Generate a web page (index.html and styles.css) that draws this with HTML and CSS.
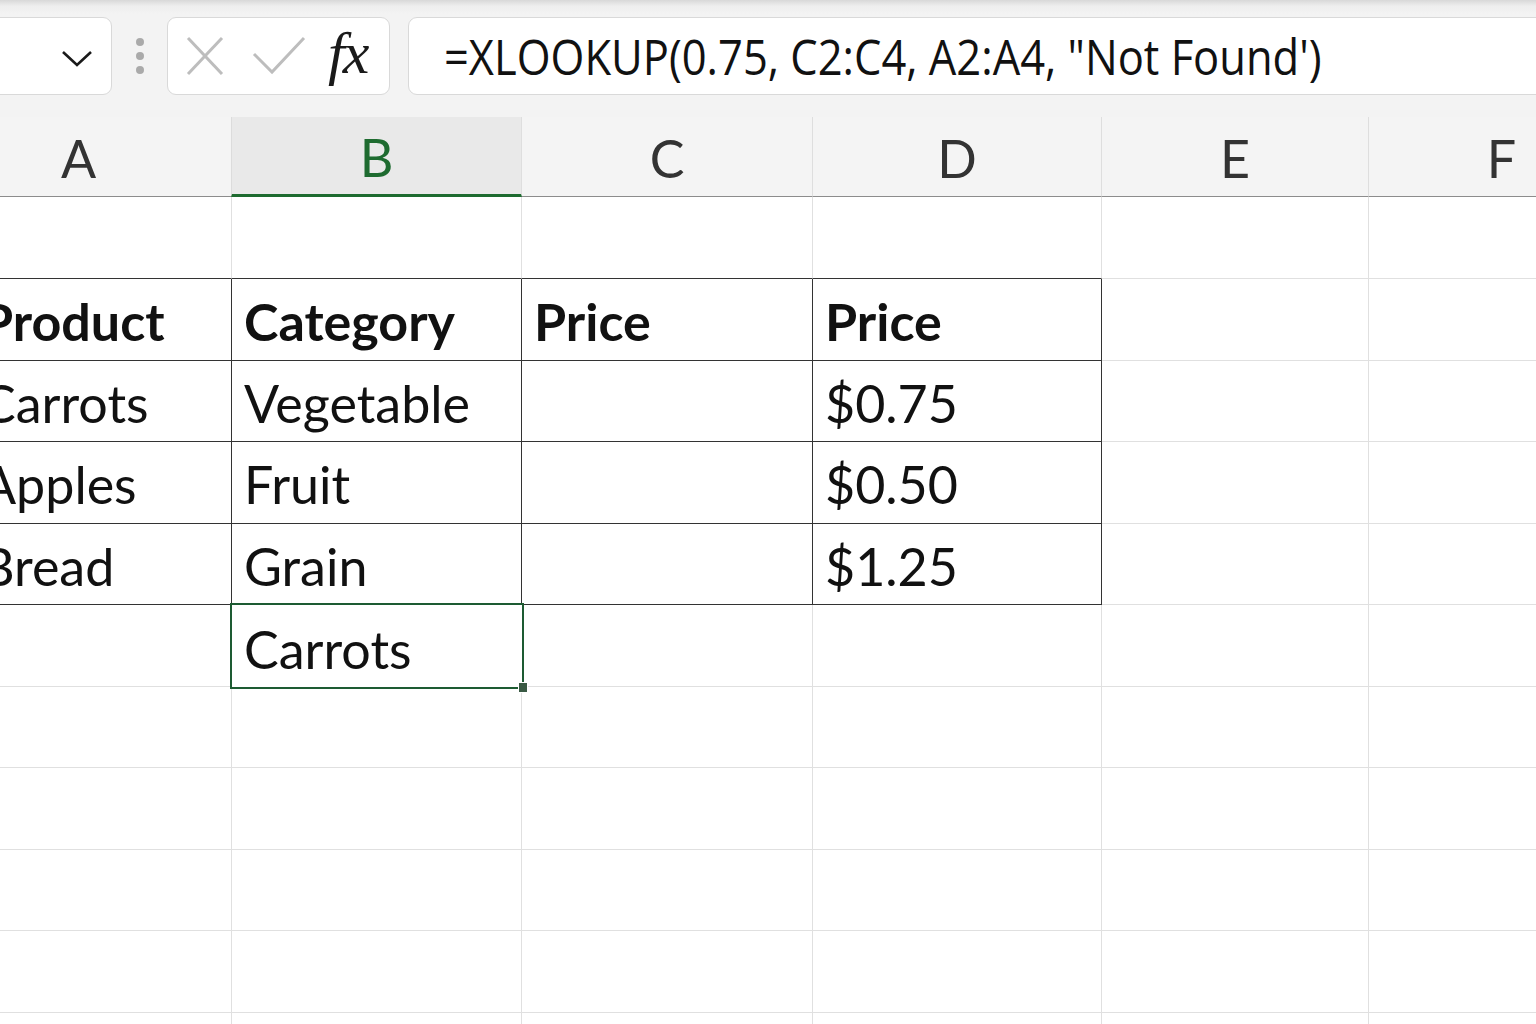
FILE: index.html
```html
<!DOCTYPE html>
<html lang="en">
<head>
    <meta charset="UTF-8">
    <meta name="viewport" content="width=device-width, initial-scale=1.0">
    <title>XLOOKUP - Sheet</title>
    <link rel="stylesheet" href="styles.css">
</head>
<body>
    <div class="toolbar">
        <div class="name-box">
            <svg class="chevron" width="32" height="20" viewBox="0 0 32 20">
                <polyline points="2,4 16,17 30,4" fill="none" stroke="#1a1a1a" stroke-width="2.6"/>
            </svg>
        </div>
        <div class="grip">
            <span class="dot"></span>
            <span class="dot"></span>
            <span class="dot"></span>
        </div>
        <div class="fx-box">
            <svg class="icon" width="40" height="42" viewBox="0 0 40 42">
                <line x1="3" y1="3" x2="37" y2="39" stroke="#bdbdbd" stroke-width="3"/>
                <line x1="37" y1="3" x2="3" y2="39" stroke="#bdbdbd" stroke-width="3"/>
            </svg>
            <svg class="icon" width="56" height="42" viewBox="0 0 56 42">
                <polyline points="3,19 21,37 53,3" fill="none" stroke="#bdbdbd" stroke-width="3"/>
            </svg>
            <span class="fx">fx</span>
        </div>
        <div class="formula-box">
            <span class="formula">=XLOOKUP(0.75, C2:C4, A2:A4, "Not Found')</span>
        </div>
    </div>

    <div class="sheet">
        <div class="col-head head-a">A</div>
        <div class="col-head active">B</div>
        <div class="col-head">C</div>
        <div class="col-head">D</div>
        <div class="col-head">E</div>
        <div class="col-head head-f">F</div>

        <!-- row 1 -->
        <div class="cell top-edge"></div>
        <div class="cell top-edge"></div>
        <div class="cell top-edge"></div>
        <div class="cell top-edge"></div>
        <div class="cell"></div>
        <div class="cell"></div>

        <!-- row 2 -->
        <div class="cell boxed bold">Product</div>
        <div class="cell boxed bold">Category</div>
        <div class="cell boxed bold">Price</div>
        <div class="cell boxed bold">Price</div>
        <div class="cell"></div>
        <div class="cell"></div>

        <!-- row 3 -->
        <div class="cell boxed">Carrots</div>
        <div class="cell boxed">Vegetable</div>
        <div class="cell boxed"></div>
        <div class="cell boxed">$0.75</div>
        <div class="cell"></div>
        <div class="cell"></div>

        <!-- row 4 -->
        <div class="cell boxed">Apples</div>
        <div class="cell boxed">Fruit</div>
        <div class="cell boxed"></div>
        <div class="cell boxed">$0.50</div>
        <div class="cell"></div>
        <div class="cell"></div>

        <!-- row 5 -->
        <div class="cell boxed">Bread</div>
        <div class="cell boxed">Grain</div>
        <div class="cell boxed"></div>
        <div class="cell boxed">$1.25</div>
        <div class="cell"></div>
        <div class="cell"></div>

        <!-- row 6 -->
        <div class="cell"></div>
        <div class="cell selected">Carrots<span class="handle"></span></div>
        <div class="cell"></div>
        <div class="cell"></div>
        <div class="cell"></div>
        <div class="cell"></div>

        <!-- rows 7-11 -->
        <div class="cell"></div><div class="cell"></div><div class="cell"></div><div class="cell"></div><div class="cell"></div><div class="cell"></div>
        <div class="cell"></div><div class="cell"></div><div class="cell"></div><div class="cell"></div><div class="cell"></div><div class="cell"></div>
        <div class="cell"></div><div class="cell"></div><div class="cell"></div><div class="cell"></div><div class="cell"></div><div class="cell"></div>
        <div class="cell"></div><div class="cell"></div><div class="cell"></div><div class="cell"></div><div class="cell"></div><div class="cell"></div>
        <div class="cell"></div><div class="cell"></div><div class="cell"></div><div class="cell"></div><div class="cell"></div><div class="cell"></div>
    </div>
</body>
</html>
```

FILE: styles.css
```css
* {
    margin: 0;
    padding: 0;
    box-sizing: border-box;
}

body {
    width: 1536px;
    height: 1024px;
    overflow: hidden;
    background: #fff;
    font-family: Lato, "Noto Sans", sans-serif;
    color: #111;
}

/* formula bar */
.toolbar {
    height: 117px;
    display: flex;
    align-items: flex-start;
    padding-top: 17px;
    background: linear-gradient(#d8d8d8 0px, #eeeeee 6px, #f3f3f3 14px, #f3f3f3 100%);
}

.name-box {
    width: 122px;
    height: 78px;
    margin-left: -10px;
    background: #fff;
    border: 1.5px solid #d9d9d9;
    border-radius: 9px;
    display: flex;
    align-items: center;
    justify-content: flex-end;
    padding-right: 18px;
}

.chevron {
    margin-top: 4px;
}

.grip {
    width: 55px;
    height: 78px;
    display: flex;
    flex-direction: column;
    align-items: center;
    justify-content: center;
    gap: 6px;
}

.dot {
    width: 8px;
    height: 8px;
    border-radius: 50%;
    background: #aaa;
}

.fx-box {
    width: 223px;
    height: 78px;
    background: #fff;
    border: 1.5px solid #d9d9d9;
    border-radius: 9px;
    display: flex;
    align-items: center;
    padding-left: 17px;
    gap: 26px;
}

.icon {
    flex: none;
}

.fx {
    font-family: "Liberation Serif", "DejaVu Serif", serif;
    font-style: italic;
    font-size: 60px;
    color: #1a1a1a;
    margin-left: -5px;
    margin-top: -6px;
    letter-spacing: -2px;
}

.formula-box {
    flex: 1;
    height: 78px;
    margin-left: 18px;
    margin-right: -20px;
    background: #fff;
    border: 1.5px solid #d9d9d9;
    border-radius: 9px;
    display: flex;
    align-items: center;
    padding-left: 35px;
    overflow: hidden;
}

.formula {
    display: inline-block;
    font-family: "Open Sans", "Noto Sans", sans-serif;
    font-size: 50px;
    color: #111;
    white-space: nowrap;
    transform: scaleX(0.87);
    transform-origin: left center;
}

/* grid */
.sheet {
    display: grid;
    grid-template-columns: 263px 290px 291px 289px 267px 300px;
    grid-template-rows: 80px 82px;
    grid-auto-rows: 81.5px;
    margin-left: -31px;
}

.col-head {
    background: #f4f4f4;
    border-bottom: 1.5px solid #8c8c8c;
    border-right: 1px solid #dedede;
    display: flex;
    align-items: center;
    justify-content: center;
    font-size: 52px;
    color: #333;
    padding-top: 2px;
}

.head-a {
    padding-right: 44px;
    border-right: none;
}

.head-f {
    padding-right: 34px;
}

.col-head.active {
    background: #e9e9e9;
    color: #1e6b30;
    border-bottom: 3px solid #1e6b30;
    border-left: 1px solid #dcdcdc;
    margin-left: -1px;
}

.cell {
    border-right: 1px solid #e0e0e0;
    border-bottom: 1px solid #e0e0e0;
    display: flex;
    align-items: center;
    padding-left: 12px;
    padding-top: 4px;
    font-size: 52px;
    white-space: nowrap;
    position: relative;
}

.top-edge {
    border-bottom-color: #333;
}

.boxed {
    border-right-color: #333;
    border-bottom-color: #333;
}

.bold {
    font-weight: bold;
}

.selected {
    border: 2.5px solid #1d5b32;
    margin: -2px -2px -2px -2px;
    padding-left: 12px;
    padding-top: 6px;
    z-index: 1;
}

.handle {
    position: absolute;
    right: -6px;
    bottom: -6px;
    width: 10px;
    height: 11px;
    background: #3a5a44;
    border: 1px solid #fff;
}
```
